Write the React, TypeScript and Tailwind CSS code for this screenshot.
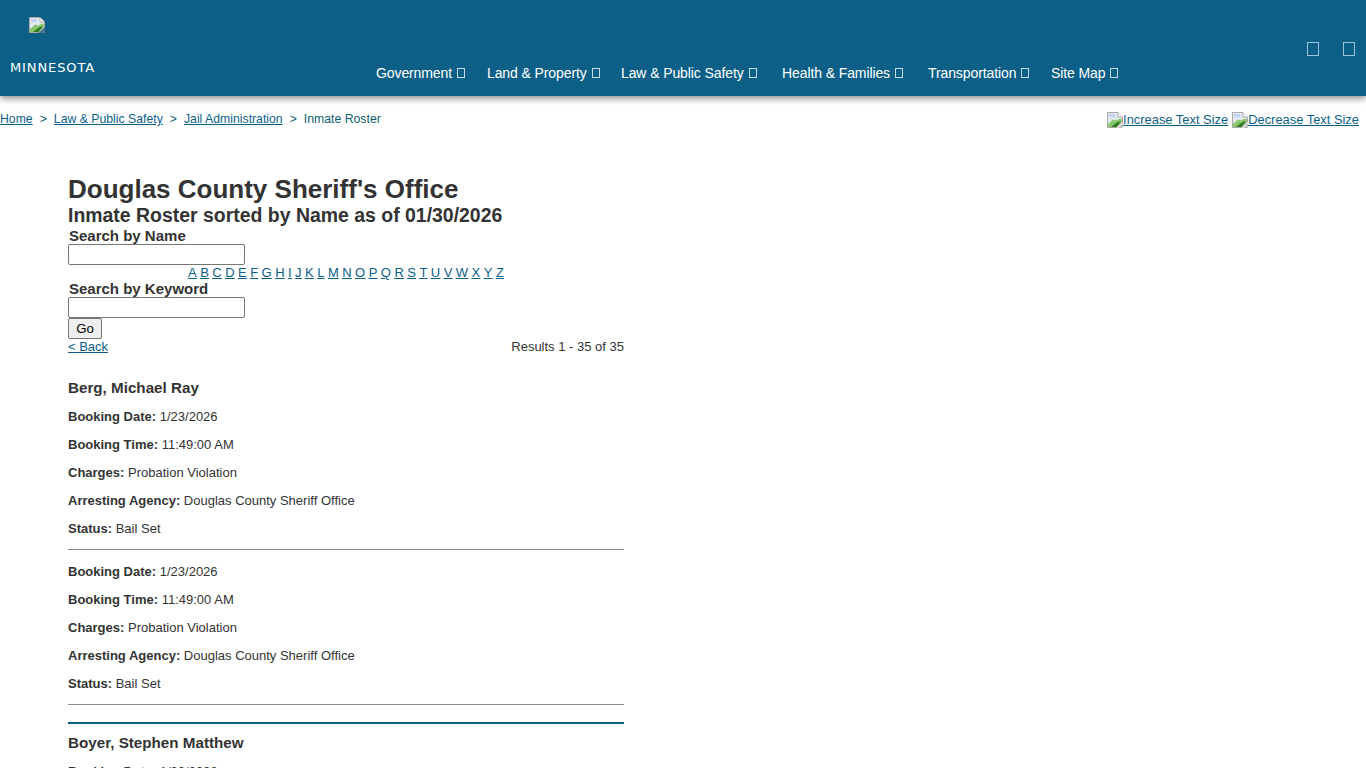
const BrokenImg = () => (
  <svg width="16" height="16" viewBox="0 0 16 16" className="inline-block shrink-0 align-baseline">
    <path d="M0.5 0.5H11L15.5 5V10L10 15.5H0.5Z" fill="#e4e9f1" stroke="#a8a8a8" />
    <path d="M11 0.5V5H15.5" fill="#ffffff" stroke="#a8a8a8" />
    <path d="M2 2h6v3H2z" fill="#c3d3ef" />
    <path d="M1 15V12L6 7.5L9 8.5L13 6.5L15 7.5V9.5L9.5 15Z" fill="#8cc66e" />
    <path d="M4 15L9 11L12 9.5L14 9.5L9.5 15Z" fill="#2e7d22" />
    <path d="M11 16L16 11V16Z" fill="#8c8c8c" fillOpacity="0.55" />
  </svg>
);

const Tofu = ({ big = false }: { big?: boolean }) => (
  <span className={big ? "inline-block w-[12px] h-[14px] border border-[#9cc3d8]" : "inline-block w-[8px] h-[10px] border border-[#c4dde9] ml-[5px]"} />
);

const navItems = [
  { label: "Government", w: "w-[111px]" },
  { label: "Land & Property", w: "w-[134px]" },
  { label: "Law & Public Safety", w: "w-[161px]" },
  { label: "Health & Families", w: "w-[146px]" },
  { label: "Transportation", w: "w-[123px]" },
  { label: "Site Map", w: "w-[80px]" },
];

const letters = "ABCDEFGHIJKLMNOPQRSTUVWXYZ".split("");

const crumbs = ["Home", "Law & Public Safety", "Jail Administration"];

const Row = ({ k, v }: { k: string; v: string }) => (
  <p className="h-[28px] leading-[28px] whitespace-nowrap">
    <b>{k}</b> {v}
  </p>
);

const Booking = ({ date = "1/23/2026" }: { date?: string }) => (
  <>
    <Row k="Booking Date:" v={date} />
    <Row k="Booking Time:" v="11:49:00 AM" />
    <Row k="Charges:" v="Probation Violation" />
    <Row k="Arresting Agency:" v="Douglas County Sheriff Office" />
    <Row k="Status:" v="Bail Set" />
  </>
);

export default function App() {
  return (
    <div className="h-[768px] overflow-hidden bg-white text-[#333333] text-[13px] font-['Liberation_Sans',Arial,sans-serif]">
      <header className="h-[96px] bg-[#0c5f87] shadow-[0_3px_6px_rgba(0,0,0,0.4)] flex">
        <div className="w-[376px] shrink-0 pt-[17px] pl-[10px]">
          <div className="pl-[19px] h-[42px] flex items-start text-[#0f6090] text-[13px] leading-[16px]">
            <BrokenImg />
            <span>Douglas County</span>
          </div>
          <div className="text-[13px] leading-[18px] text-white font-['DejaVu_Sans',sans-serif] font-medium tracking-[0.9px]">MINNESOTA</div>
        </div>
        <nav className="flex items-start pt-[64px] text-white text-[14px] leading-[18px] tracking-[-0.1px]">
          {navItems.map((n) => (
            <div key={n.label} className={`${n.w} whitespace-nowrap flex items-center`}>
              {n.label}
              <Tofu />
            </div>
          ))}
        </nav>
        <div className="ml-auto pt-[42px] pr-[11px] flex gap-[24px] items-start">
          <Tofu big />
          <Tofu big />
        </div>
      </header>

      <div className="flex justify-between items-start pt-[15px] h-[72px]">
        <div className="text-[12.25px] leading-[16px] flex text-[#0c5f6f]">
          {crumbs.map((c) => (
            <span key={c} className="flex">
              <a className="underline text-[#0c5f87]">{c}</a>
              <span className="px-[7px]">&gt;</span>
            </span>
          ))}
          <span>Inmate Roster</span>
        </div>
        <div className="pr-[7px] pt-[1px] flex gap-[4px] text-[12.9px] leading-[16px] text-[#0c5f87] underline">
          <a className="flex"><BrokenImg />Increase Text Size</a>
          <a className="flex"><BrokenImg />Decrease Text Size</a>
        </div>
      </div>

      <main className="ml-[68px] w-[556px]">
        <h1 className="text-[26px] leading-[30px] font-bold mt-[6px]">Douglas County Sheriff's Office</h1>
        <h2 className="text-[19.45px] leading-[22px] font-bold">Inmate Roster sorted by Name as of 01/30/2026</h2>
        <div className="font-bold text-[15px] leading-[17px] pl-[1px] pt-[1px]">Search by Name</div>
        <input className="block w-[177px] h-[21px] bg-white border border-[#767676] rounded-[2px]" />
        <div className="pl-[120px] h-[14px] leading-[15px] flex gap-[3.48px] text-[#0c5f87] underline">
          {letters.map((l) => <a key={l}>{l}</a>)}
        </div>
        <div className="font-bold text-[15px] leading-[17px] pl-[1px] pt-[1px]">Search by Keyword</div>
        <input className="block w-[177px] h-[21px] bg-white border border-[#767676] rounded-[2px]" />
        <button className="block w-[34px] h-[21px] bg-[#efefef] border border-[#767676] rounded-[2px] text-[13.3px] leading-[17px] text-black">Go</button>
        <div className="flex justify-between h-[16px] leading-[15px]">
          <a className="underline text-[#0c5f87]">&lt; Back</a>
          <span>Results 1 - 35 of 35</span>
        </div>

        <h3 className="font-bold text-[15.2px] leading-[18px] mt-[24px] mb-[6px]">Berg, Michael Ray</h3>
        <Booking />
        <hr className="mt-[6px] mb-[8px] border-0 border-t border-[#8c8c8c]" />
        <Booking />
        <hr className="mt-[6px] mb-[17px] border-0 border-t border-[#8c8c8c]" />
        <div className="h-[2px] bg-[#0c5f87]" />
        <h3 className="font-bold text-[15.2px] leading-[18px] mt-[10px] mb-[6px]">Boyer, Stephen Matthew</h3>
        <Booking date="1/30/2026" />
      </main>
    </div>
  );
}
